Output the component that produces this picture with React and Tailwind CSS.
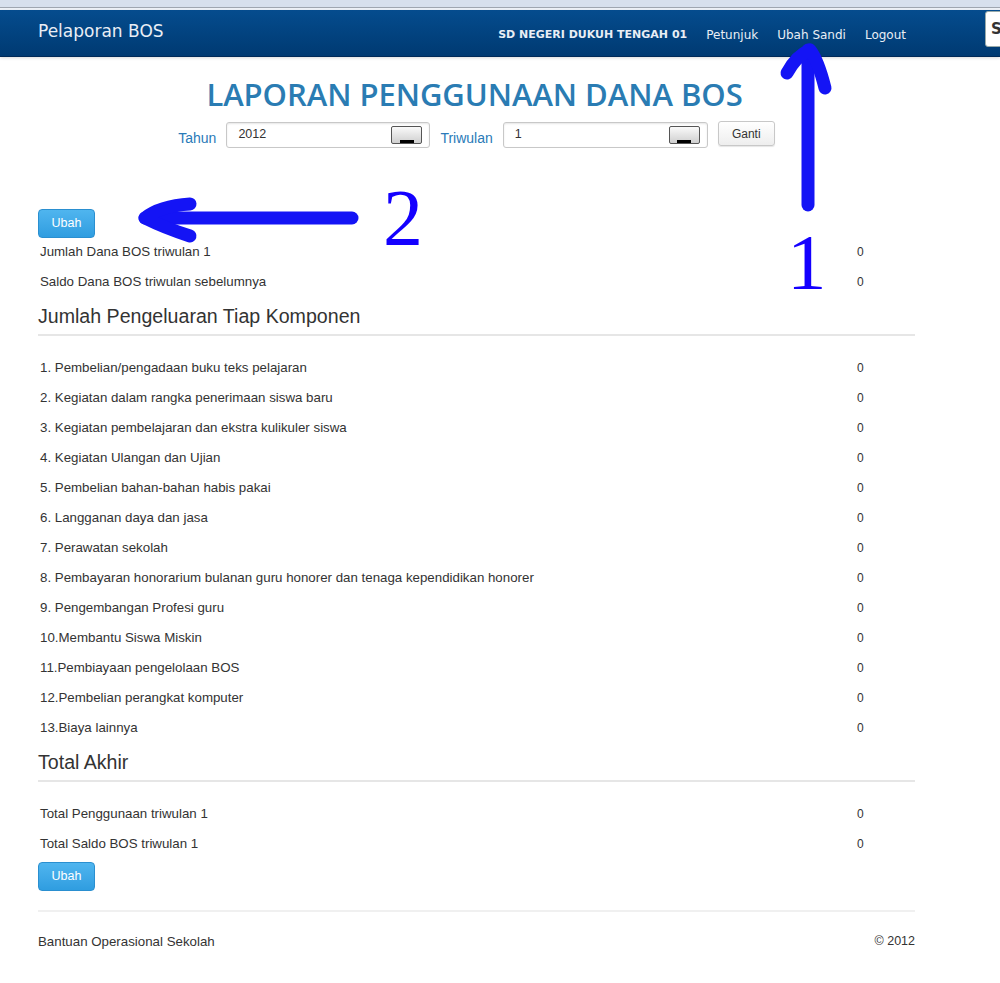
const items = [
  "1. Pembelian/pengadaan buku teks pelajaran",
  "2. Kegiatan dalam rangka penerimaan siswa baru",
  "3. Kegiatan pembelajaran dan ekstra kulikuler siswa",
  "4. Kegiatan Ulangan dan Ujian",
  "5. Pembelian bahan-bahan habis pakai",
  "6. Langganan daya dan jasa",
  "7. Perawatan sekolah",
  "8. Pembayaran honorarium bulanan guru honorer dan tenaga kependidikan honorer",
  "9. Pengembangan Profesi guru",
  "10.Membantu Siswa Miskin",
  "11.Pembiayaan pengelolaan BOS",
  "12.Pembelian perangkat komputer",
  "13.Biaya lainnya",
];

function Row({ label, value = 0 }) {
  return (
    <div className="grid grid-cols-[819px_1fr] h-[30px] items-center text-[13.3px] text-[#333]">
      <span className="pl-[2px]">{label}</span>
      <span className="text-[12px]">{value}</span>
    </div>
  );
}

function Section({ title }) {
  return (
    <div className="pt-[4px]">
      <h2 className="text-[19.6px] leading-[30px] text-[#333]">{title}</h2>
      <div className="mt-[3px] mb-[17px] h-[2px] bg-[#e6e6e6]" />
    </div>
  );
}

function UbahButton() {
  return (
    <button className="w-[57px] h-[29px] rounded-[4px] border border-[#2a8fd0] bg-gradient-to-b from-[#4fb5ef] to-[#2f9de0] text-white text-[12.5px]">
      Ubah
    </button>
  );
}

// old-style dropdown handle sitting at the right of the inputs
function PickerKnob() {
  return (
    <div className="w-[31px] h-[18px] rounded-[2px] border border-[#555] bg-gradient-to-b from-[#fafafa] to-[#cfcfcf] flex items-end justify-center">
      <div className="w-[14px] h-[3px] bg-black" />
    </div>
  );
}

function Field({ label, value, width }) {
  return (
    <>
      <span className="text-[14px] text-[#2a7ab8] mt-[6px]">{label}</span>
      <div
        className={`${width} h-[26px] border border-[#c8c8c8] rounded-[3px] shadow-[inset_0_1px_2px_rgba(0,0,0,0.1)] flex items-center justify-between pl-[11px] pr-[7px] text-[12.5px] text-[#333]`}
      >
        <span className="-mt-[2px]">{value}</span>
        <PickerKnob />
      </div>
    </>
  );
}

function Annotations() {
  return (
    <div className="absolute inset-0 pointer-events-none">
      <svg className="absolute inset-0" width="1000" height="983">
        <g stroke="#1414f5" strokeWidth="13" strokeLinecap="round" strokeLinejoin="round" fill="none">
          <path d="M808 205 L808 50" />
          <path d="M787 73 Q796 56 810 50 Q818 60 825 88" />
          <path d="M352 218 L145 218" />
          <path d="M190 204 Q160 206 145 218 Q165 228 190 236" />
        </g>
      </svg>
      <span className="absolute left-[787px] top-[222px] text-[79px] leading-none text-[#1400ff] font-['Liberation_Serif',serif]">
        1
      </span>
      <span className="absolute left-[383px] top-[178px] text-[80px] leading-none text-[#1400ff] font-['Liberation_Serif',serif]">
        2
      </span>
    </div>
  );
}

export default function App() {
  return (
    <div className="relative w-[1000px] min-h-[983px] bg-white font-['Liberation_Sans',Arial,sans-serif] overflow-hidden">
      {/* window chrome strip */}
      <div className="h-[7px] bg-[#d7e0ed]" />
      <div className="h-[1px] bg-[#9fa6b0]" />
      <div className="h-[2px] bg-[#eef2f8]" />

      {/* navbar */}
      <div className="h-[47px] bg-gradient-to-b from-[#054c8e] to-[#003a72] border-b border-[#002a58] shadow-[0_1px_3px_rgba(0,0,0,0.15)] flex items-center font-['DejaVu_Sans',sans-serif]">
        <span className="ml-[38px] text-[17px] text-[#e9eef5] -mt-[3px]">Pelaporan BOS</span>
        <div className="ml-auto flex items-center gap-[19px] text-[12px] text-[#e9eef5] mt-[4px]">
          <span className="font-bold text-[11px]">SD NEGERI DUKUH TENGAH 01</span>
          <span>Petunjuk</span>
          <span>Ubah Sandi</span>
          <span>Logout</span>
        </div>
        <div className="ml-[79px] -mr-[9px] w-[24px] h-[36px] -mt-[9px] shrink-0 bg-white border border-[#9aa] rounded-l-[3px] pl-[5px] pt-[6px] text-[15px] font-bold text-[#333] overflow-hidden">
          S
        </div>
      </div>

      <div className="ml-[38px] w-[877px]">
        <h1 className="mt-[19px] text-center text-[31px] leading-[36px] font-semibold text-[#2a7cb3] font-['Open_Sans',sans-serif] tracking-[-0.05px] pr-[4px]">
          LAPORAN PENGGUNAAN DANA BOS
        </h1>

        <div className="mt-[10px] flex items-start justify-center gap-[10px]">
          <Field label="Tahun" value="2012" width="w-[204px]" />
          <Field label="Triwulan" value="1" width="w-[205px]" />
          <button className="-mt-[1px] w-[57px] h-[25px] border border-[#c8c8c8] rounded-[3px] bg-gradient-to-b from-white to-[#eee] shadow-[0_1px_1px_rgba(0,0,0,0.1)] text-[12px] text-[#333]">
            Ganti
          </button>
        </div>

        <div className="mt-[60px]">
          <UbahButton />
        </div>

        <div className="-mt-[1px]">
          <Row label="Jumlah Dana BOS triwulan 1" />
          <Row label="Saldo Dana BOS triwulan sebelumnya" />

          <Section title="Jumlah Pengeluaran Tiap Komponen" />
          {items.map((t) => (
            <Row key={t} label={t} />
          ))}

          <Section title="Total Akhir" />
          <Row label="Total Penggunaan triwulan 1" />
          <Row label="Total Saldo BOS triwulan 1" />
          <div className="mt-[3px]">
            <UbahButton />
          </div>
        </div>

        <div className="mt-[19px] h-[2px] bg-[#f0f0f0]" />
        <div className="flex justify-between mt-[20px] text-[13.3px] text-[#333]">
          <span>Bantuan Operasional Sekolah</span>
          <span className="text-[12.5px]">© 2012</span>
        </div>
      </div>

      <Annotations />
    </div>
  );
}
